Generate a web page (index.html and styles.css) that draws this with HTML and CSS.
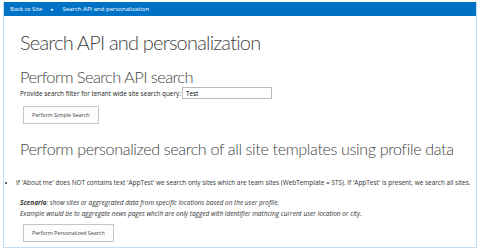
FILE: index.html
```html
<!DOCTYPE html>
<html lang="en">
<head>
    <meta charset="UTF-8">
    <title>Search API and personalization</title>
    <link rel="stylesheet" href="styles.css">
</head>
<body>
    <div class="page">
        <div class="top-bar">
            <a href="#">Back to Site</a>
            <span class="sep">&#9656;</span>
            <span>Search API and personalization</span>
        </div>

        <main class="main-content">
            <h1>Search API and personalization</h1>

            <h2>Perform Search API search</h2>
            <div class="query-row">
                <label for="query">Provide search filter for tenant wide site search query:</label>
                <input type="text" id="query" value="Test">
            </div>
            <button class="action">Perform Simple Search</button>

            <h2 class="second">Perform personalized search of all site templates using profile data</h2>
            <ul class="notes">
                <li>If 'About me' does NOT contains text 'AppTest' we search only sites which are team sites (WebTemplate = STS). If 'AppTest' is present, we search all sites.</li>
            </ul>
            <p class="scenario"><strong>Scenario</strong>: show sites or aggregrated data from specific locations based on the user profile.<br>
                Example would be to aggregate news pages whcih are only tagged with identifier mathcing current user location or city.</p>
            <button class="action last">Perform Personalized Search</button>
        </main>
    </div>
</body>
</html>
```

FILE: styles.css
```css
body, h1, h2, p, ul {
    margin: 0;
    padding: 0;
}

body {
    font-family: "Open Sans", "Liberation Sans", sans-serif;
    color: #333;
    background-color: #ffffff;
}

.page {
    margin: 2px 2px 2px 3px;
    height: 246px;
    border: 1px solid #c8dcef;
    border-top: none;
    box-sizing: border-box;
}

.top-bar {
    background-color: #0072c6;
    height: 14px;
    line-height: 14px;
    font-size: 6px;
    color: white;
    padding-left: 6px;
}

.top-bar a {
    color: white;
    text-decoration: none;
}

.top-bar .sep {
    font-size: 5px;
    margin: 0 7px;
}

.main-content {
    padding-left: 16px;
}

h1, h2 {
    font-family: Lato, "Open Sans", sans-serif;
    font-weight: 300;
    color: #444;
    white-space: nowrap;
}

h1 {
    font-size: 20px;
    letter-spacing: -0.8px;
    margin-top: 12px;
    line-height: 28px;
}

h2 {
    font-size: 16.5px;
    letter-spacing: -0.6px;
    margin-top: 11px;
    line-height: 20px;
}

.query-row {
    display: flex;
    align-items: center;
    font-size: 6.4px;
    color: #222;
}

.query-row input {
    margin-left: 1px;
    width: 90px;
    height: 12px;
    box-sizing: border-box;
    border: 1px solid #bbb;
    font-family: inherit;
    font-size: 6.4px;
    padding: 0 3px;
}

.action {
    display: block;
    margin: 7px 0 0 3px;
    height: 18px;
    padding: 0 8px;
    background-color: #fdfdfd;
    border: 1px solid #c6c6c6;
    font-family: inherit;
    font-size: 5.4px;
    color: #444;
}

.action.last {
    margin-top: 5px;
}

h2.second {
    margin-top: 15px;
    font-size: 16.1px;
    letter-spacing: -0.35px;
}

.notes {
    list-style-type: disc;
    margin: 19px 0 0 -10px;
    padding-left: 6px;
    font-size: 6.45px;
    color: #333;
}

.scenario {
    margin: 10px 0 0 0;
    font-size: 6.5px;
    font-style: italic;
    line-height: 11px;
    color: #333;
}
```
